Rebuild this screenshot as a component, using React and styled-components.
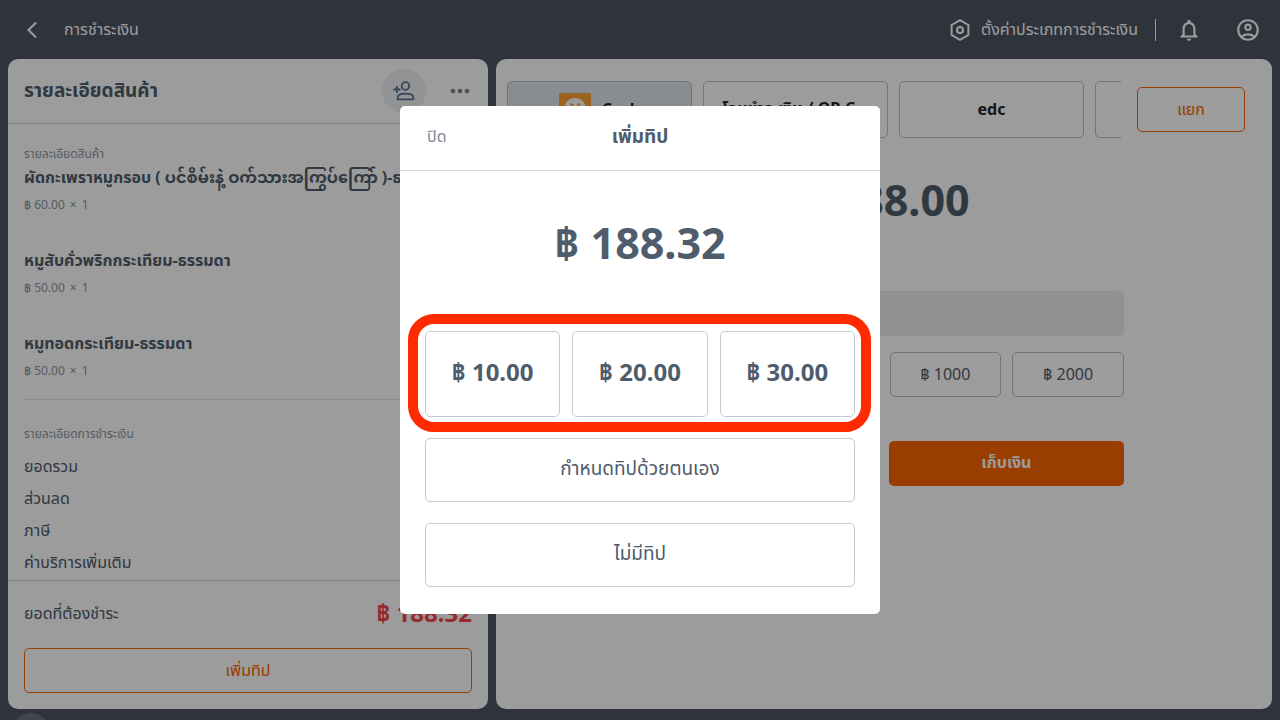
import styled, { createGlobalStyle } from "styled-components";
import {
  MdArrowBackIosNew,
  MdMoreHoriz,
  MdOutlineAccountCircle,
  MdNotificationsNone,
} from "react-icons/md";

const items = [
  {
    name: "ผัดกะเพราหมูกรอบ ( ပင်စိမ်းနဲ့ ဝက်သားအကြွပ်ကြော် )-ธรรมดา",
    price: "฿ 60.00",
    qty: 1,
  },
  { name: "หมูสับคั่วพริกกระเทียม-ธรรมดา", price: "฿ 50.00", qty: 1 },
  { name: "หมูทอดกระเทียม-ธรรมดา", price: "฿ 50.00", qty: 1 },
];

const summary = ["ยอดรวม", "ส่วนลด", "ภาษี", "ค่าบริการเพิ่มเติม"];
const cash = ["฿ 1000", "฿ 2000"];
const tips = ["฿ 10.00", "฿ 20.00", "฿ 30.00"];

const HexIcon = () => (
  <svg width="22" height="24" viewBox="0 0 22 24" fill="none" stroke="currentColor" strokeWidth="2" strokeLinejoin="round">
    <path d="M11 2.2 19.4 7v10L11 21.8 2.6 17V7z" />
    <circle cx="11" cy="12" r="3" />
  </svg>
);

const AddPersonIcon = () => (
  <svg width="24" height="24" viewBox="0 0 24 24" fill="none" stroke="currentColor" strokeWidth="1.8">
    <circle cx="13.5" cy="7" r="3.8" />
    <path d="M5.6 20.3v-1.6c0-2.6 3.6-4.1 7.9-4.1s7.9 1.500 7.9 4.100v1.600z" strokeLinejoin="round" />
    <path d="M5 7v7M1.500 10.500h7" />
  </svg>
);

const CashIcon = () => (
  <svg width="32" height="32" viewBox="0 0 32 32">
    <rect width="32" height="32" rx="2" fill="#ffa033" />
    <circle cx="16" cy="16" r="11" fill="#fff" />
    <path d="M11.500 10.500 16 16l4.500-5.500M16 16v6M12 17h8M12 20h8" fill="none" stroke="#ffa033" strokeWidth="2" />
  </svg>
);

const App = () => {
  return (
    <Page>
      <GlobalStyle />
      <TopBar>
        <IconBtn aria-label="back">
          <MdArrowBackIosNew size={20} />
        </IconBtn>
        <PageTitle>การชำระเงิน</PageTitle>
        <SettingsLink href="#settings">
          <HexIcon />
          ตั้งค่าประเภทการชำระเงิน
        </SettingsLink>
        <Divider />
        <TopIcons>
          <IconBtn aria-label="notifications">
            <MdNotificationsNone size={26} />
          </IconBtn>
          <IconBtn aria-label="account">
            <MdOutlineAccountCircle size={26} />
          </IconBtn>
        </TopIcons>
      </TopBar>

      <Main>
        <Panel>
          <OrderHeader>
            <h2>รายละเอียดสินค้า</h2>
            <RoundBtn aria-label="add member">
              <AddPersonIcon />
            </RoundBtn>
            <IconBtn aria-label="more" $muted>
              <MdMoreHoriz size={28} />
            </IconBtn>
          </OrderHeader>
          <OrderBody>
            <Caption>รายละเอียดสินค้า</Caption>
            <ItemList>
              {items.map((item) => (
                <Item key={item.name}>
                  <h3>{item.name}</h3>
                  <p>
                    <span>{item.price}</span>
                    <span>×</span>
                    <span>{item.qty}</span>
                  </p>
                </Item>
              ))}
            </ItemList>
            <Summary>
              <Caption>รายละเอียดการชำระเงิน</Caption>
              {summary.map((label) => (
                <SummaryRow key={label}>{label}</SummaryRow>
              ))}
            </Summary>
          </OrderBody>
          <OrderFooter>
            <Total>
              <span>ยอดที่ต้องชำระ</span>
              <strong>฿ 188.32</strong>
            </Total>
            <OutlineBtn>เพิ่มทิป</OutlineBtn>
          </OrderFooter>
        </Panel>

        <Panel>
          <Methods>
            <MethodStrip>
              <MethodBtn $active>
                <CashIcon />
                Cash
              </MethodBtn>
              <MethodBtn>โอนชำระเงิน / QR C...</MethodBtn>
              <MethodBtn>edc</MethodBtn>
              <MethodBtn aria-label="other" />
            </MethodStrip>
            <SplitBtn>แยก</SplitBtn>
          </Methods>
          <Payment>
            <Amount>฿ 188.00</Amount>
            <CashInput aria-label="cash received" />
            <CashGrid>
              {cash.map((label) => (
                <CashBtn key={label}>{label}</CashBtn>
              ))}
            </CashGrid>
            <PayRow>
              <PayBtn>เก็บเงิน</PayBtn>
            </PayRow>
          </Payment>
        </Panel>
      </Main>
      <Dock>
        <DockHandle />
      </Dock>

      <Overlay>
        <Modal role="dialog" aria-labelledby="tip-title">
          <ModalHeader>
            <CloseBtn>ปิด</CloseBtn>
            <h2 id="tip-title">เพิ่มทิป</h2>
          </ModalHeader>
          <ModalBody>
            <Amount>฿ 188.32</Amount>
            <TipRow>
              {tips.map((tip) => (
                <TipBtn key={tip} $large>
                  {tip}
                </TipBtn>
              ))}
              <Highlight />
            </TipRow>
            <TipBtn>กำหนดทิปด้วยตนเอง</TipBtn>
            <TipBtn>ไม่มีทิป</TipBtn>
          </ModalBody>
        </Modal>
      </Overlay>
    </Page>
  );
};

const GlobalStyle = createGlobalStyle`
  * {
    box-sizing: border-box;
  }

  body {
    margin: 0;
  }

  body, button, input {
    font-family: "Noto Sans", "Noto Sans Thai", "Noto Sans Myanmar", sans-serif;
    color: #4f5c6c;
  }

  h1, h2, h3, p {
    margin: 0;
  }

  button {
    padding: 0;
    background: none;
    border: none;
    cursor: pointer;
  }
`;

const Page = styled.div`
  display: flex;
  flex-direction: column;
  height: 100vh;
  background-color: #4c5462;
  overflow: hidden;
`;

const TopBar = styled.header`
  display: flex;
  align-items: center;
  flex-shrink: 0;
  height: 59px;
  padding: 0 19px 0 22px;
  color: white;
`;

const IconBtn = styled.button`
  display: flex;
  color: ${(props) => (props.$muted ? "#7d8491" : "white")};
`;

const PageTitle = styled.h1`
  flex-grow: 1;
  margin-left: 22px;
  font-size: 16px;
  font-weight: 400;
`;

const SettingsLink = styled.a`
  display: flex;
  align-items: center;
  gap: 10px;
  font-size: 16px;
  color: white;
  text-decoration: none;
`;

const Divider = styled.span`
  width: 1px;
  height: 22px;
  margin: 0 20px 0 17px;
  background-color: white;
`;

const TopIcons = styled.div`
  display: flex;
  gap: 33px;
`;

const Main = styled.main`
  flex: 1;
  min-height: 0;
  display: grid;
  grid-template-columns: clamp(320px, 38vw, 480px) 1fr;
  gap: 8px;
  padding: 0 8px;
`;

const Panel = styled.section`
  display: flex;
  flex-direction: column;
  min-width: 0;
  min-height: 0;
  background-color: white;
  border-radius: 10px;
`;

const OrderHeader = styled.div`
  display: flex;
  align-items: center;
  gap: 20px;
  flex-shrink: 0;
  height: 65px;
  padding: 0 14px 0 16px;
  border-bottom: 1px solid #ccd0d6;

  & h2 {
    flex-grow: 1;
    font-size: 19px;
  }
`;

const RoundBtn = styled.button`
  display: flex;
  align-items: center;
  justify-content: center;
  width: 44px;
  height: 44px;
  border-radius: 50%;
  background-color: #eef0f4;
  color: #5a6f94;
`;

const OrderBody = styled.div`
  flex: 1;
  min-height: 0;
  padding: 20px 16px 0;
  overflow: hidden;
`;

const Caption = styled.p`
  font-size: 12px;
  line-height: 20px;
  color: #8e95a1;
`;

const ItemList = styled.ul`
  display: flex;
  flex-direction: column;
  gap: 30px;
  margin: 0;
  padding: 0 0 16px;
  list-style: none;
  border-bottom: 1px solid #e0e2e5;
`;

const Item = styled.li`
  & h3 {
    font-size: 16px;
    line-height: 26px;
    white-space: nowrap;
  }

  & p {
    display: flex;
    gap: 5px;
    margin-top: 3px;
    font-size: 12px;
    line-height: 24px;
    color: #8e95a1;
  }
`;

const Summary = styled.div`
  padding-top: 24px;

  & ${Caption} {
    margin-bottom: 6px;
  }
`;

const SummaryRow = styled.div`
  font-size: 16px;
  line-height: 32px;
`;

const OrderFooter = styled.div`
  padding: 15px 16px 16px;
  border-top: 1px solid #ccd0d6;
`;

const Total = styled.div`
  display: flex;
  justify-content: space-between;
  align-items: center;
  height: 36px;
  margin-bottom: 16px;
  font-size: 16px;

  & strong {
    font-size: 24px;
    color: #f5474a;
  }
`;

const OutlineBtn = styled.button`
  width: 100%;
  height: 45px;
  border: 1px solid #fa6400;
  border-radius: 5px;
  font-size: 16px;
  color: #fa6400;
`;

const SplitBtn = styled(OutlineBtn)`
  flex-shrink: 0;
  width: 108px;
`;

const Methods = styled.div`
  display: flex;
  align-items: center;
  gap: 16px;
  padding: 22px 27px 0 11px;
`;

const MethodStrip = styled.div`
  flex: 1;
  display: flex;
  gap: 11px;
  min-width: 0;
  overflow: hidden;
`;

const MethodBtn = styled.button`
  display: flex;
  align-items: center;
  justify-content: center;
  flex: 0 0 185px;
  gap: 11px;
  height: 57px;
  padding-bottom: 2px;
  border: 1px solid #b4bfcc;
  border-radius: 5px;
  background-color: ${(props) => (props.$active ? "#e1e5ee" : "white")};
  font-size: 16px;
  font-weight: 700;
  color: #262626;
`;

const Payment = styled.div`
  display: flex;
  flex-direction: column;
  gap: 16px;
  width: 100%;
  max-width: 480px;
  margin: 0 auto;
`;

const Amount = styled.div`
  padding: 32px 0 45px;
  font-size: 43px;
  font-weight: 700;
  line-height: 60px;
  text-align: center;
`;

const CashInput = styled.input`
  width: 100%;
  height: 45px;
  border: none;
  border-radius: 5px;
  background-color: #eeeeee;
`;

const CashGrid = styled.div`
  display: grid;
  grid-template-columns: repeat(4, 1fr);
  gap: 11px;

  & button:first-child {
    grid-column-start: 3;
  }
`;

const CashBtn = styled.button`
  height: 45px;
  border: 1px solid #b4bfcc;
  border-radius: 5px;
  font-size: 16px;
`;

const PayRow = styled.div`
  display: flex;
  justify-content: flex-end;
  padding-top: 28px;
`;

const PayBtn = styled.button`
  width: 49%;
  height: 45px;
  padding-bottom: 2px;
  border-radius: 5px;
  background-color: #fa6400;
  font-size: 16px;
  font-weight: 700;
  color: white;
`;

const Dock = styled.footer`
  flex-shrink: 0;
  height: 11px;
  padding: 4px 12px 0;
  overflow: hidden;
`;

const DockHandle = styled.div`
  width: 38px;
  height: 38px;
  border-radius: 50%;
  background-color: #6b7280;
`;

const Overlay = styled.div`
  position: fixed;
  inset: 0;
  display: flex;
  align-items: center;
  justify-content: center;
  background-color: rgba(0, 0, 0, 0.39);
`;

const Modal = styled.div`
  width: 100%;
  max-width: 480px;
  background-color: white;
  border-radius: 5px;
`;

const ModalHeader = styled.div`
  display: grid;
  grid-template-columns: 1fr auto 1fr;
  align-items: center;
  height: 65px;
  padding: 0 27px 2px;
  border-bottom: 1px solid #d5d8dc;

  & h2 {
    font-size: 19px;
  }
`;

const CloseBtn = styled.button`
  justify-self: start;
  font-size: 16px;
  color: #7d8794;
`;

const ModalBody = styled.div`
  display: flex;
  flex-direction: column;
  gap: 21px;
  padding: 0 25px 27px;

  & ${Amount} {
    padding: 42px 0 37px;
  }
`;

const TipRow = styled.div`
  position: relative;
  display: grid;
  grid-template-columns: repeat(3, 1fr);
  gap: 12px;
`;

const TipBtn = styled.button`
  height: ${(props) => (props.$large ? "86px" : "64px")};
  padding-bottom: 2px;
  border: 1px solid #c6c9d2;
  border-radius: 5px;
  font-size: ${(props) => (props.$large ? "24px" : "19px")};
  font-weight: ${(props) => (props.$large ? 700 : 400)};
`;

const Highlight = styled.div`
  position: absolute;
  inset: -17px -16px -15px -17px;
  border: 10px solid #ff2a00;
  border-radius: 26px;
  pointer-events: none;
`;

export default App;
